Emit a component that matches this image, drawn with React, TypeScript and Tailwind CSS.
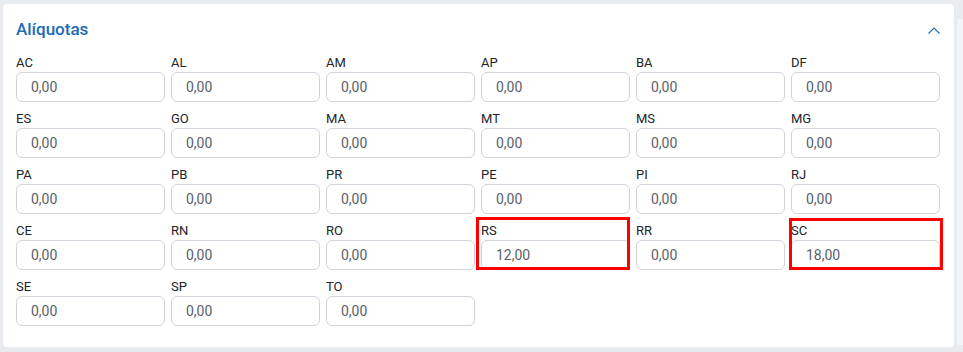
import React from "react";

const rows: [string, string][][] = [
  [["AC", "0,00"], ["AL", "0,00"], ["AM", "0,00"], ["AP", "0,00"], ["BA", "0,00"], ["DF", "0,00"]],
  [["ES", "0,00"], ["GO", "0,00"], ["MA", "0,00"], ["MT", "0,00"], ["MS", "0,00"], ["MG", "0,00"]],
  [["PA", "0,00"], ["PB", "0,00"], ["PR", "0,00"], ["PE", "0,00"], ["PI", "0,00"], ["RJ", "0,00"]],
  [["CE", "0,00"], ["RN", "0,00"], ["RO", "0,00"], ["RS", "12,00"], ["RR", "0,00"], ["SC", "18,00"]],
  [["SE", "0,00"], ["SP", "0,00"], ["TO", "0,00"]],
];

function Field({ uf, value }: { uf: string; value: string }) {
  return (
    <div className="relative flex flex-col">
      <label className="h-[16px] text-[13px] leading-[16px] text-[#212529]">{uf}</label>
      <div className="mt-[1px] flex h-[30px] w-full items-center rounded-[6px] border border-[#ced4da] bg-white pl-[14px] text-[14px] text-[#5a6169]">
        {value}
      </div>
      {uf === "RS" && (
        <div className="pointer-events-none absolute left-[-5px] top-[-6px] h-[53px] w-[154px] border-[3px] border-[#ff0000]" />
      )}
      {uf === "SC" && (
        <div className="pointer-events-none absolute left-[-2px] top-[-5px] h-[52px] w-[154px] border-[3px] border-[#ff0000]" />
      )}
    </div>
  );
}

export default function App() {
  return (
    <div className="flex h-[352px] w-[963px] bg-[#e9ecef]" style={{ fontFamily: "Roboto, 'Noto Sans', sans-serif" }}>
      <div className="ml-[3px] mt-[4px] h-[343px] w-[951px] rounded-[4px] bg-white px-[13px] pt-[12px]">
        <div className="flex h-[28px] items-center justify-between">
          <h2 className="text-[17px] font-medium text-[#1a6bb8]">Alíquotas</h2>
          <svg width="14" height="10" viewBox="0 0 14 10" className="mr-[0px] mt-[2px]">
            <path d="M1.5 7.5 L7 2 L12.5 7.5" fill="none" stroke="#1a6bb8" strokeWidth="1.2" />
          </svg>
        </div>
        <div className="mt-[11px] grid grid-cols-6 gap-x-[6px] gap-y-[9px] pr-[1px]">
          {rows.flat().map(([uf, v]) => (
            <Field key={uf} uf={uf} value={v} />
          ))}
        </div>
      </div>
      <div className="ml-[3px] mt-[19px] h-[326px] w-[6px] bg-[#f3f4f6]" />
    </div>
  );
}
